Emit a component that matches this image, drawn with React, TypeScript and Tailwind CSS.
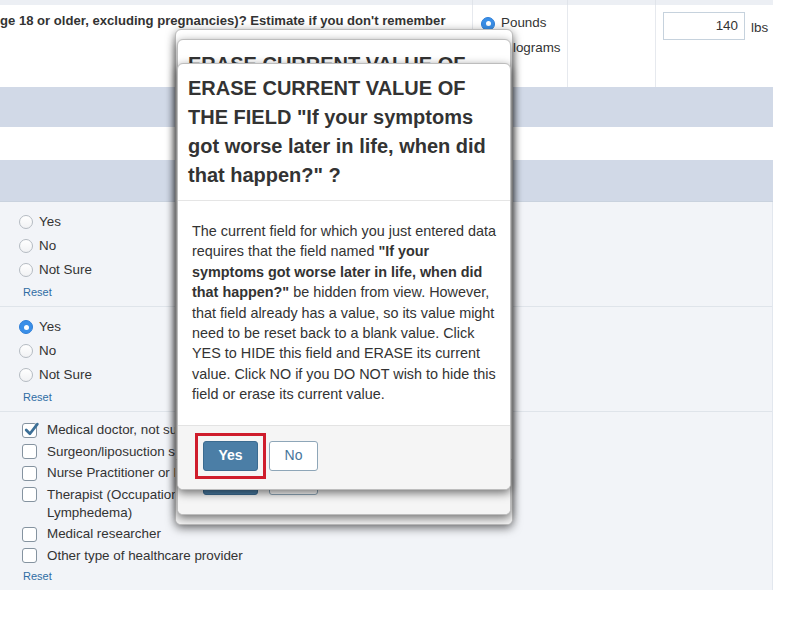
import React from "react";

// ── Small form controls ───────────────────────────────────────────────────────

function Radio({ checked = false }: { checked?: boolean }) {
  if (checked) {
    return (
      <span className="flex h-[14px] w-[14px] shrink-0 items-center justify-center rounded-full border border-[#2f7fd8] bg-[#3a8fe8]">
        <span className="h-[5px] w-[5px] rounded-full bg-white" />
      </span>
    );
  }
  return (
    <span className="h-[14px] w-[14px] shrink-0 rounded-full border border-[#b5bbc2] bg-gradient-to-b from-white to-[#f1f2f4]" />
  );
}

function Checkbox({ checked = false }: { checked?: boolean }) {
  return (
    <span className="relative mt-[1.5px] h-[15px] w-[15px] shrink-0 rounded-[3px] border border-[#8593a0] bg-white">
      {checked && (
        <svg
          viewBox="0 0 16 16"
          className="absolute -top-[3px] left-[0px] h-[17px] w-[17px]"
          fill="none"
          stroke="#3c6f97"
          strokeWidth="2.6"
          strokeLinecap="round"
          strokeLinejoin="round"
        >
          <path d="M3 8.5 L6.5 12 L13.5 3" />
        </svg>
      )}
    </span>
  );
}

function Reset({ className = "" }: { className?: string }) {
  return (
    <p className={`text-[11px] leading-[14px] text-[#2f6ca4] ${className}`}>
      Reset
    </p>
  );
}

function RadioGroup({ selected }: { selected?: string }) {
  const options = ["Yes", "No", "Not Sure"];
  return (
    <div className="flex flex-col">
      {options.map((o) => (
        <div key={o} className="flex h-[24px] items-center gap-[6px]">
          <Radio checked={o === selected} />
          <span>{o}</span>
        </div>
      ))}
      <Reset className="mt-[3px] pl-[4px]" />
    </div>
  );
}

// ── Dialog ────────────────────────────────────────────────────────────────────
// The two dialogs behind the front one only show their edges, the top of the
// title and the bottoms of their buttons, so they render without body text.

function Dialog({
  className,
  front = false,
  showTitle = false,
}: {
  className: string;
  front?: boolean;
  showTitle?: boolean;
}) {
  return (
    <div
      className={`absolute flex flex-col overflow-hidden rounded-[6px] border border-[#bdbdbd] bg-white shadow-[0_3px_10px_rgba(0,0,0,0.55)] ${className}`}
    >
      {front ? (
        <>
          {/* Title */}
          <div className="border-b border-[#e5e5e5] px-[10px] py-[10px] text-[20px] font-bold leading-[29px] whitespace-nowrap text-[#333]">
            ERASE CURRENT VALUE OF
            <br />
            THE FIELD "If your symptoms
            <br />
            got worse later in life, when did
            <br />
            that happen?" ?
          </div>

          {/* Body */}
          <div className="flex-1 px-[14px] py-[20px] text-[14.4px] leading-[20.4px] whitespace-nowrap text-[#333]">
            The current field for which you just entered data
            <br />
            requires that the field named <b>"If your</b>
            <br />
            <b>symptoms got worse later in life, when did</b>
            <br />
            <b>that happen?"</b> be hidden from view. However,
            <br />
            that field already has a value, so its value might
            <br />
            need to be reset back to a blank value. Click
            <br />
            YES to HIDE this field and ERASE its current
            <br />
            value. Click NO if you DO NOT wish to hide this
            <br />
            field or erase its current value.
          </div>

          {/* Buttons, "Yes" boxed in red */}
          <div className="flex h-[65px] shrink-0 items-start border-t border-[#e3e3e3] bg-[#f5f5f5] pl-[17px] pt-[7px]">
            <div className="border-[3px] border-[#cf1d2c] p-[5px]">
              <button className="block h-[30px] w-[55px] rounded-[3px] border border-[#3b6b90] bg-[#4b7ea6] text-[14px] font-bold text-white">
                Yes
              </button>
            </div>
            <button className="ml-[3px] mt-[8px] h-[30px] w-[49px] rounded-[3px] border border-[#8ea6b8] bg-white text-[14px] text-[#46759b]">
              No
            </button>
          </div>
        </>
      ) : (
        <>
          <div className="h-[29px] px-[10px] pt-[10px] text-[20px] font-bold leading-[29px] whitespace-nowrap text-[#333]">
            {showTitle ? "ERASE CURRENT VALUE OF" : ""}
          </div>
          <div className="flex-1" />
          <div className="flex h-[65px] shrink-0 items-start border-t border-[#e3e3e3] bg-[#f5f5f5] pl-[25px] pt-[15px]">
            <span className="block h-[30px] w-[55px] rounded-[3px] border border-[#3b6b90] bg-[#4b7ea6]" />
            <span className="ml-[11px] block h-[30px] w-[49px] rounded-[3px] border border-[#8ea6b8] bg-white" />
          </div>
        </>
      )}
    </div>
  );
}

// ── Page ──────────────────────────────────────────────────────────────────────

export default function App() {
  const providers = [
    { label: "Medical doctor, not surgeon", checked: true },
    { label: "Surgeon/liposuction specialist" },
    { label: "Nurse Practitioner or Physician Assistant" },
    {
      label: (
        <>
          Therapist (Occupational, Physical or Massage) specializing in
          <br />
          Lymphedema)
        </>
      ),
    },
    { label: "Medical researcher" },
    { label: "Other type of healthcare provider" },
  ];

  return (
    <div className="relative h-[619px] w-[794px] overflow-hidden bg-white font-['Liberation_Sans',Arial,sans-serif] text-[13.4px] text-[#333]">
      <div className="w-[773px]">
        {/* Remnant of the previous row */}
        <div className="grid h-[5px] grid-cols-[472px_95px_88px_118px] bg-[#eceff4]">
          <div />
          <div className="border-l border-[#e0e4ea]" />
          <div className="border-l border-[#e0e4ea]" />
          <div className="border-l border-[#e0e4ea]" />
        </div>

        {/* Weight question row */}
        <div className="grid h-[82px] grid-cols-[472px_95px_88px_118px] bg-white">
          <div className="pt-[8px] text-[13.1px] font-bold leading-[16px] whitespace-nowrap">
            ge 18 or older, excluding pregnancies)? Estimate if you don't remember
          </div>
          <div className="border-l border-[#e6e9ee] pl-[8px] pt-[6px]">
            <div className="flex h-[25px] items-center gap-[6px]">
              <Radio checked />
              <span>Pounds</span>
            </div>
            <div className="flex h-[25px] items-center gap-[6px]">
              <Radio />
              <span>Kilograms</span>
            </div>
          </div>
          <div className="border-l border-[#e6e9ee]" />
          <div className="flex items-start border-l border-[#e6e9ee] pl-[7px] pt-[7px]">
            <div className="flex h-[28px] w-[82px] items-center justify-end border border-[#c6d2dd] bg-white pr-[6px]">
              140
            </div>
            <span className="ml-[6px] mt-[6px]">lbs</span>
          </div>
        </div>

        {/* Section bands */}
        <div className="h-[40px] bg-[#d1d9e7]" />
        <div className="h-[33px] bg-white" />
        <div className="h-[42px] border-b border-[#c9d2de] bg-[#d1d9e7]" />

        {/* Answer rows */}
        <div className="border-r border-[#e2e7ee] bg-[#f2f4f8]">
          <div className="h-[105px] border-b border-[#dfe4ea] pl-[19px] pt-[8px]">
            <RadioGroup />
          </div>
          <div className="h-[105px] border-b border-[#dfe4ea] pl-[19px] pt-[8px]">
            <RadioGroup selected="Yes" />
          </div>
          <div className="h-[178px] pl-[22px] pt-[9px]">
            <div className="flex flex-col gap-[3.5px]">
              {providers.map((p, i) => (
                <div key={i} className="flex items-start gap-[10px] leading-[18px]">
                  <Checkbox checked={p.checked} />
                  <span className="whitespace-nowrap">{p.label}</span>
                </div>
              ))}
            </div>
            <Reset className="mt-[4px] pl-[1px]" />
          </div>
        </div>
      </div>

      {/* Stacked confirm dialogs */}
      <Dialog className="left-[175px] top-[29px] h-[496px] w-[338px]" />
      <Dialog className="left-[177px] top-[39px] h-[476px] w-[334px]" showTitle />
      <Dialog className="left-[177px] top-[63px] h-[427px] w-[334px]" front />
    </div>
  );
}
